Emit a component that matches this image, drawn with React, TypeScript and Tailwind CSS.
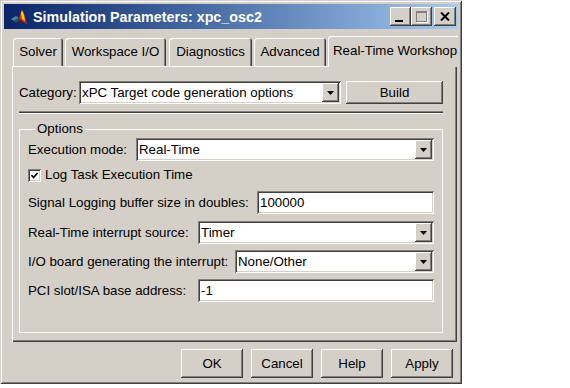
import React from "react";

const raised =
  "bg-[#d4d0c8] shadow-[inset_-1px_-1px_0_#404040,inset_1px_1px_0_#ffffff,inset_-2px_-2px_0_#808080,inset_2px_2px_0_#d4d0c8]";
const sunken =
  "bg-white shadow-[inset_1px_1px_0_#808080,inset_-1px_-1px_0_#ffffff,inset_2px_2px_0_#404040,inset_-2px_-2px_0_#d4d0c8]";

const Arrow = () => (
  <div className={`${raised} w-[17px] self-stretch my-[2px] mr-[2px] flex items-center justify-center`}>
    <svg width="7" height="4" viewBox="0 0 7 4">
      <polygon points="0,0 7,0 3.5,4" fill="#000" />
    </svg>
  </div>
);

const Select = ({ value }: { value: string }) => (
  <div className={`${sunken} flex-1 h-[23px] flex items-center`}>
    <span className="flex-1 pl-[3px] truncate">{value}</span>
    <Arrow />
  </div>
);

const Field = ({ value }: { value: string }) => (
  <div className={`${sunken} flex-1 h-[23px] flex items-center pl-[3px]`}>{value}</div>
);

const MatlabIcon = () => (
  <svg width="18" height="18" viewBox="0 0 18 18">
    <polygon points="1,11 6,8 9,10 4,13" fill="#3a8a9a" />
    <polygon points="4,13 9,10 10,12 6,15" fill="#1d4e66" />
    <polygon points="9,10 12,2 14,6 17,16 12,13" fill="#e03010" />
    <polygon points="11,5 12,2 14,7 15,13 12,11" fill="#ffd000" />
    <polygon points="9,10 12,13 10,15" fill="#901000" />
  </svg>
);

const tabs = [
  { label: "Solver", w: "w-[50px]", mr: "mr-[2px]" },
  { label: "Workspace I/O", w: "w-[101px]", mr: "mr-[3px]" },
  { label: "Diagnostics", w: "w-[83px]", mr: "mr-[2px]" },
  { label: "Advanced", w: "w-[72px]", mr: "mr-[2px]" },
];

const rows = [
  { label: "Signal Logging buffer size in doubles:", w: "w-[229px]", mt: "mt-[8px]", value: "100000", select: false },
  { label: "Real-Time interrupt source:", w: "w-[170px]", mt: "mt-[7px]", value: "Timer", select: true },
  { label: "I/O board generating the interrupt:", w: "w-[207px]", mt: "mt-[6px]", value: "None/Other", select: true },
  { label: "PCI slot/ISA base address:", w: "w-[170px]", mt: "mt-[6px]", value: "-1", select: false },
];

export default function App() {
  return (
    <div className="w-[570px] h-[388px] bg-white font-['Liberation_Sans',Arial,sans-serif] text-[13.3px] leading-[16px] text-black">
      <div className="w-[462px] h-[384px] bg-[#d4d0c8] p-[4px] flex flex-col shadow-[inset_1px_1px_0_#d4d0c8,inset_-1px_-1px_0_#404040,inset_2px_2px_0_#ffffff,inset_-2px_-2px_0_#808080]">
        {/* title bar */}
        <div className="h-[25px] flex items-center pl-[6px] pr-[2px] bg-gradient-to-r from-[#0a246a] to-[#a6caf0]">
          <MatlabIcon />
          <span className="ml-[5px] text-white font-bold text-[14.3px]">Simulation Parameters: xpc_osc2</span>
          <div className="flex-1" />
          <div className={`${raised} w-[21px] h-[19px] flex items-end pl-[5px] pb-[4px]`}>
            <div className="w-[8px] h-[2px] bg-black" />
          </div>
          <div className={`${raised} w-[21px] h-[19px] flex items-center justify-center`}>
            <div className="w-[11px] h-[11px] border border-[#808080] border-t-2 shadow-[1px_1px_0_#ffffff]" />
          </div>
          <div className={`${raised} w-[22px] h-[19px] ml-[2px] flex items-center justify-center`}>
            <svg width="10" height="9" viewBox="0 0 10 9">
              <path d="M1 0.5 L9 8.5 M9 0.5 L1 8.5" stroke="#000" strokeWidth="2" />
            </svg>
          </div>
        </div>

        {/* tabs */}
        <div className="mt-[7px] ml-[8px] w-[446px] h-[31px] flex items-start overflow-hidden relative z-10 pl-[1px]">
          {tabs.map((t) => (
            <div
              key={t.label}
              className={`${t.w} ${t.mr} shrink-0 mt-[2px] h-[28px] rounded-t-[3px] flex items-center justify-center shadow-[inset_1px_1px_0_#ffffff,inset_-1px_0_0_#404040,inset_-2px_0_0_#808080]`}
            >
              {t.label}
            </div>
          ))}
          <div className="w-[140px] shrink-0 h-[31px] bg-[#d4d0c8] rounded-t-[3px] flex items-start pt-[7px] pl-[5px] whitespace-nowrap shadow-[inset_1px_1px_0_#ffffff]">
            Real-Time Workshop
          </div>
        </div>

        {/* panel */}
        <div className="-mt-[1px] ml-[8px] w-[445px] h-[276px] pt-[15px] pl-[7px] pr-[14px] shadow-[inset_1px_1px_0_#ffffff,inset_-1px_-1px_0_#404040,inset_-2px_-2px_0_#808080]">
          <div className="flex items-center h-[23px]">
            <span className="w-[60px] shrink-0">Category:</span>
            <div className={`${sunken} w-[262px] h-[23px] flex items-center`}>
              <span className="flex-1 pl-[3px] truncate">xPC Target code generation options</span>
              <Arrow />
            </div>
            <button className={`${raised} ml-[5px] flex-1 h-[23px]`}>Build</button>
          </div>
          <div className="mt-[7px] h-[2px] bg-[#404040] border-t border-[#808080]" />
          <div className="h-[1px] bg-white" />

          <fieldset className="mt-[7px] h-[212px] border border-white pl-[8px] pr-[8px]">
            <legend className="ml-[7px] px-[2px]">Options</legend>
            <div className="mt-[1px] flex items-center h-[23px]">
              <span className="w-[108px] shrink-0">Execution mode:</span>
              <Select value="Real-Time" />
            </div>
            <div className="mt-[6px] flex items-center h-[16px]">
              <div className={`${sunken} w-[13px] h-[13px] flex items-center justify-center`}>
                <svg width="7" height="7" viewBox="0 0 7 7">
                  <path d="M0.5 3 L2.5 5.5 L6.5 1" stroke="#000" strokeWidth="1.6" fill="none" />
                </svg>
              </div>
              <span className="ml-[4px]">Log Task Execution Time</span>
            </div>
            {rows.map((r) => (
              <div key={r.label} className={`${r.mt} flex items-center h-[23px]`}>
                <span className={`${r.w} shrink-0 whitespace-nowrap`}>{r.label}</span>
                {r.select ? <Select value={r.value} /> : <Field value={r.value} />}
              </div>
            ))}
          </fieldset>
        </div>

        {/* buttons */}
        <div className="mt-[7px] flex justify-end gap-[8px] pr-[5px]">
          {["OK", "Cancel", "Help", "Apply"].map((b) => (
            <button key={b} className={`${raised} w-[62px] h-[29px]`}>
              {b}
            </button>
          ))}
        </div>
      </div>
    </div>
  );
}
